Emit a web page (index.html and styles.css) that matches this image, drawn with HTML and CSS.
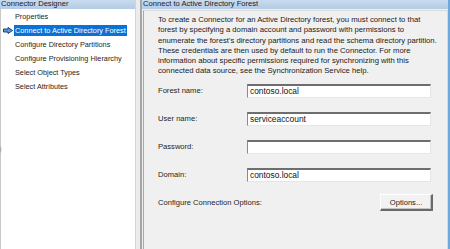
FILE: index.html
```html
<!DOCTYPE html>
<html lang="en">
<head>
    <meta charset="UTF-8">
    <meta name="viewport" content="width=device-width, initial-scale=1.0">
    <title>Connector Designer</title>
    <link rel="stylesheet" href="styles.css">
</head>

<body>
    <div class="window">
        <!-- Left: designer steps -->
        <div class="sidebar">
            <div class="pane-header sidebar-header">Connector Designer</div>
            <ul class="steps">
                <li class="step">Properties</li>
                <li class="step active">
                    <svg class="step-arrow" width="10" height="7" viewBox="0 0 10 7">
                        <path d="M0.5 2 H5 V0.5 L9.5 3.5 L5 6.5 V5 H0.5 Z" fill="#5b9bd5" stroke="#1f3f7a" stroke-width="1"/>
                    </svg>
                    <span class="step-label">Connect to Active Directory Forest</span>
                </li>
                <li class="step">Configure Directory Partitions</li>
                <li class="step">Configure Provisioning Hierarchy</li>
                <li class="step">Select Object Types</li>
                <li class="step">Select Attributes</li>
            </ul>
            <span class="grip">)</span>
        </div>

        <div class="splitter"></div>

        <!-- Right: current step -->
        <div class="main">
            <div class="pane-header">Connect to Active Directory Forest</div>
            <div class="content">
                <p class="intro">To create a Connector for an Active Directory forest, you must connect to that<br>
                forest by specifying a domain account and password with permissions to<br>
                enumerate the forest's directory partitions and read the schema directory partition.<br>
                These credentials are then used by default to run the Connector. For more<br>
                information about specific permissions required for synchronizing with this<br>
                connected data source, see the Synchronization Service help.</p>

                <div class="field">
                    <label for="forest">Forest name:</label>
                    <input type="text" id="forest" value="contoso.local">
                </div>
                <div class="field">
                    <label for="user">User name:</label>
                    <input type="text" id="user" value="serviceaccount">
                </div>
                <div class="field">
                    <label for="password">Password:</label>
                    <input type="password" id="password">
                </div>
                <div class="field">
                    <label for="domain">Domain:</label>
                    <input type="text" id="domain" value="contoso.local">
                </div>
                <div class="field options-row">
                    <span class="options-label">Configure Connection Options:</span>
                    <button class="options-btn">Options...</button>
                </div>
            </div>
        </div>
        <div class="frame-edge"></div>
    </div>
</body>
</html>
```

FILE: styles.css
```css
/* Page */
body {
    margin: 0;
    padding: 0;
    font-family: "Liberation Sans", Arial, sans-serif;
    font-size: 7.6px;
    color: #1e1e1e;
    background-color: #f0f0f0;
    overflow: hidden;
}

.window {
    display: flex;
    width: 450px;
    height: 249px;
}

/* Blue title strips */
.pane-header {
    height: 9px;
    line-height: 8px;
    padding-left: 1px;
    background: linear-gradient(#c9dbee, #b3cbe6);
    color: #1a1a1a;
    white-space: nowrap;
    overflow: hidden;
}

/* Left pane */
.sidebar {
    position: relative;
    width: 136px;
    background-color: #fff;
    border-left: 1px solid #c8c8c8;
    border-right: 1px solid #d4d4d4;
    box-sizing: border-box;
    font-size: 7.3px;
}

.sidebar-header {
    margin-left: -1px;
    font-size: 7.6px;
}

.steps {
    list-style: none;
    margin: 0;
    padding: 2px 0 0 0;
}

.step {
    display: flex;
    align-items: center;
    height: 11px;
    margin-bottom: 3px;
    padding-left: 14px;
    white-space: nowrap;
}

.step.active {
    padding-left: 2px;
}

.step-arrow {
    margin-right: 1px;
    flex-shrink: 0;
}

.step-label {
    background-color: #0a72d6;
    color: #fff;
    height: 11px;
    line-height: 11px;
    padding: 0 1px;
}

.grip {
    position: absolute;
    left: -2px;
    top: 144px;
    font-size: 8px;
    color: #9a9a9a;
}

/* Divider between panes */
.splitter {
    width: 4px;
    background-color: #ececec;
    border-right: 2px solid #a6a6a6;
}

/* Right pane */
.main {
    flex: 1;
    display: flex;
    flex-direction: column;
    min-width: 0;
}

.content {
    flex: 1;
    margin-top: 1px;
    margin-left: 1px;
    border-left: 1px solid #a9a9a9;
    border-top: 1px solid #dadada;
    border-right: 1px solid #dadada;
    background-color: #f0f0f0;
    padding: 4px 12px 0 14px;
}

.intro {
    margin: 0;
    font-size: 7.7px;
    line-height: 10.3px;
    white-space: nowrap;
    color: #1a1a1a;
}

.field {
    display: flex;
    align-items: center;
    height: 28px;
}

.field label {
    width: 89px;
    flex-shrink: 0;
}

.field input {
    width: 184px;
    height: 14px;
    box-sizing: border-box;
    margin: 0;
    padding: 0 0 0 2px;
    border-top: 2px solid #6e6e6e;
    border-left: 1px solid #8a8a8a;
    border-right: 1px solid #e6e6e6;
    border-bottom: 1px solid #e6e6e6;
    background-color: #fff;
    font-family: "Liberation Sans", Arial, sans-serif;
    font-size: 8.4px;
    color: #111;
    outline: none;
}

.options-row {
    justify-content: space-between;
    padding-right: 2px;
}

.options-label {
    white-space: nowrap;
}

.options-btn {
    width: 53px;
    height: 17px;
    margin: 0;
    padding: 0;
    background-color: #f2f2f2;
    border-top: 1px solid #fff;
    border-left: 1px solid #fff;
    border-right: 2px solid #6a6a6a;
    border-bottom: 2px solid #6a6a6a;
    box-shadow: inset -1px -1px 0 #c4c4c4;
    font-family: "Liberation Sans", Arial, sans-serif;
    font-size: 7.6px;
    color: #222;
}

/* Window frame */
.frame-edge {
    width: 2px;
    background-color: #6ea8dc;
}
```
